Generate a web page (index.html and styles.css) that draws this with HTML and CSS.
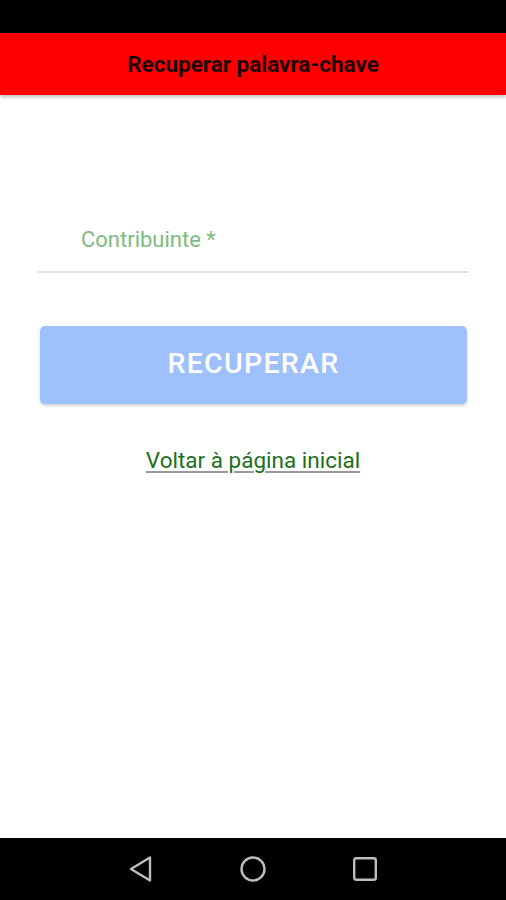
FILE: index.html
```html
<!DOCTYPE html>
<html lang="pt">
<head>
    <meta charset="UTF-8">
    <meta name="viewport" content="width=device-width, initial-scale=1.0">
    <title>Recuperar palavra-chave</title>
    <link rel="stylesheet" href="styles.css">
</head>
<body>
    <div class="screen">
        <div class="status-bar"></div>
        <header class="app-bar">
            <h1>Recuperar palavra-chave</h1>
        </header>
        <main class="content">
            <label class="field">
                <span class="field-label">Contribuinte *</span>
                <input type="text" class="field-input">
            </label>
            <button class="btn-recover" type="button">RECUPERAR</button>
            <a class="back-link" href="#">Voltar à página inicial</a>
        </main>
        <nav class="nav-bar">
            <svg width="26" height="28" viewBox="0 0 26 28">
                <path d="M22 2.5 L3 14 L22 25.5 Z" fill="none" stroke="#bdbdbd" stroke-width="2.4" stroke-linejoin="round"/>
            </svg>
            <svg width="28" height="28" viewBox="0 0 28 28">
                <circle cx="14" cy="14" r="11.5" fill="none" stroke="#bdbdbd" stroke-width="2.4"/>
            </svg>
            <svg width="26" height="26" viewBox="0 0 26 26">
                <rect x="2.2" y="2.2" width="21.6" height="21.6" rx="2" fill="none" stroke="#bdbdbd" stroke-width="2.4"/>
            </svg>
        </nav>
    </div>
</body>
</html>
```

FILE: styles.css
```css
body {
    margin: 0;
    background: #000;
    font-family: 'Roboto', 'Liberation Sans', sans-serif;
}

.screen {
    display: flex;
    flex-direction: column;
    height: 900px;
    background: #fff;
}

.status-bar {
    height: 33px;
    background: #000;
}

.app-bar {
    position: relative;
    z-index: 1;
    height: 62px;
    background: #ff0000;
    display: flex;
    align-items: center;
    justify-content: center;
    box-shadow: 0 2px 4px rgba(0, 0, 0, 0.25);
}

.app-bar h1 {
    margin: 0;
    font-size: 22.5px;
    font-weight: 700;
    color: #1a0000;
}

.content {
    flex: 1;
    display: flex;
    flex-direction: column;
    padding: 132px 37px 0;
}

.field {
    display: flex;
    flex-direction: column;
    border-bottom: 2px solid #e0e0e0;
    padding: 0 0 0 44px;
}

.field-label {
    font-size: 22px;
    color: #7dbb80;
    line-height: 26px;
}

.field-input {
    border: none;
    outline: none;
    height: 18px;
    padding: 0;
    font-size: 19px;
    background: transparent;
}

.btn-recover {
    margin: 53px 2px 0 3px;
    height: 78px;
    padding: 0 0 4px;
    border: none;
    border-radius: 5px;
    background: #9ec0fd;
    color: #fff;
    font-family: 'Roboto', 'Liberation Sans', sans-serif;
    font-size: 28.5px;
    font-weight: 500;
    letter-spacing: 1.3px;
    box-shadow: 0 2px 3px rgba(0, 0, 0, 0.18);
}

.back-link {
    align-self: center;
    margin-top: 43px;
    font-size: 22.5px;
    line-height: 26px;
    color: #1d6f1d;
    text-decoration-color: #9a9a9a;
    text-decoration-thickness: 2px;
    text-underline-offset: 3px;
}

.nav-bar {
    height: 62px;
    background: #000;
    display: flex;
    align-items: center;
    justify-content: center;
    gap: 85px;
}
```
